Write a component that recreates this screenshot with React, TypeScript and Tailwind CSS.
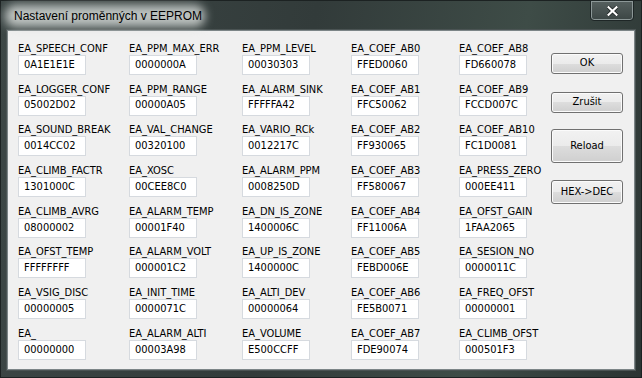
const ROWS: [string, string][][] = [
  [['EA_SPEECH_CONF', '0A1E1E1E'], ['EA_PPM_MAX_ERR', '0000000A'], ['EA_PPM_LEVEL', '00030303'], ['EA_COEF_AB0', 'FFED0060'], ['EA_COEF_AB8', 'FD660078']],
  [['EA_LOGGER_CONF', '05002D02'], ['EA_PPM_RANGE', '00000A05'], ['EA_ALARM_SINK', 'FFFFFA42'], ['EA_COEF_AB1', 'FFC50062'], ['EA_COEF_AB9', 'FCCD007C']],
  [['EA_SOUND_BREAK', '0014CC02'], ['EA_VAL_CHANGE', '00320100'], ['EA_VARIO_RCk', '0012217C'], ['EA_COEF_AB2', 'FF930065'], ['EA_COEF_AB10', 'FC1D0081']],
  [['EA_CLIMB_FACTR', '1301000C'], ['EA_XOSC', '00CEE8C0'], ['EA_ALARM_PPM', '0008250D'], ['EA_COEF_AB3', 'FF580067'], ['EA_PRESS_ZERO', '000EE411']],
  [['EA_CLIMB_AVRG', '08000002'], ['EA_ALARM_TEMP', '00001F40'], ['EA_DN_IS_ZONE', '1400006C'], ['EA_COEF_AB4', 'FF11006A'], ['EA_OFST_GAIN', '1FAA2065']],
  [['EA_OFST_TEMP', 'FFFFFFFF'], ['EA_ALARM_VOLT', '000001C2'], ['EA_UP_IS_ZONE', '1400000C'], ['EA_COEF_AB5', 'FEBD006E'], ['EA_SESION_NO', '0000011C']],
  [['EA_VSIG_DISC', '00000005'], ['EA_INIT_TIME', '0000071C'], ['EA_ALTI_DEV', '00000064'], ['EA_COEF_AB6', 'FE5B0071'], ['EA_FREQ_OFST', '00000001']],
  [['EA_', '00000000'], ['EA_ALARM_ALTI', '00003A98'], ['EA_VOLUME', 'E500CCFF'], ['EA_COEF_AB7', 'FDE90074'], ['EA_CLIMB_OFST', '000501F3']],
]

const btn =
  'w-[72px] rounded-[3px] border border-[#707070] bg-[linear-gradient(#f2f2f2_0%,#ebebeb_50%,#dddddd_50%,#cfcfcf_100%)] shadow-[inset_0_0_0_1px_#fbfbfb] text-[11px] text-black flex items-center justify-center'

function Field({ label, value }: { label: string; value: string }) {
  return (
    <div className="flex flex-col">
      <span className="h-[13px] leading-[13px] text-[11px] text-black whitespace-nowrap">{label}</span>
      <div className="w-[68px] h-[20px] bg-white border border-[#d6dadf] pl-[5px] flex items-center text-[11px] text-black">
        {value}
      </div>
    </div>
  )
}

export default function App() {
  return (
    <div
      className="w-[642px] h-[378px] flex flex-col px-[6px] pb-[7px] bg-[linear-gradient(100deg,#3d4746_0%,#323b3a_45%,#3e4c47_75%,#2b3433_100%)] border border-[#1c2222]"
      style={{ fontFamily: '"DejaVu Sans Condensed", "Liberation Sans", sans-serif' }}
    >
      {/* Title bar */}
      <div className="relative h-[29px] shrink-0">
        {/* glass glow behind the caption */}
        <div className="absolute left-[-2px] top-[4px] w-[200px] h-[22px] rounded-[10px] bg-[#d4d8d6]/85 blur-[5px]" />
        <span
          className="absolute left-[7px] top-[8px] text-[12px] leading-[14px] text-black"
          style={{ fontFamily: '"Liberation Sans", sans-serif' }}
        >
          Nastavení proměnných v EEPROM
        </span>
        <div className="absolute right-[1px] top-[-1px] w-[44px] h-[21px] rounded-b-[4px] border border-[#1e2626] shadow-[inset_0_0_0_1px_#8c9797] bg-[linear-gradient(#56605f,#3c4645)] flex items-center justify-center">
          <svg width="11" height="10" viewBox="0 0 11 10">
            <path d="M1.5 1.2 L9.5 8.8 M9.5 1.2 L1.5 8.8" stroke="#1a1f1f" strokeWidth="3.6" strokeLinecap="square" />
            <path d="M1.5 1.2 L9.5 8.8 M9.5 1.2 L1.5 8.8" stroke="#fff" strokeWidth="2.2" strokeLinecap="square" />
          </svg>
        </div>
      </div>

      {/* Client area */}
      <div className="flex-1 bg-[#f0f0f0] border border-[#7c8587] shadow-[0_0_0_1px_#4a5353] flex pl-[10px] pt-[11px]">
        <div className="grid grid-cols-[111px_113px_109px_108px_68px] gap-y-[7.7px] content-start">
          {ROWS.flat().map(([label, value]) => (
            <Field key={label} label={label} value={value} />
          ))}
        </div>
        <div className="ml-[24px] pt-[11px] flex flex-col">
          <button className={`${btn} h-[21px]`}>OK</button>
          <button className={`${btn} h-[21px] mt-[18px]`}>Zrušit</button>
          <button className={`${btn} h-[34px] mt-[16px]`}>Reload</button>
          <button className={`${btn} h-[24px] mt-[17px]`}>HEX-&gt;DEC</button>
        </div>
      </div>
    </div>
  )
}
